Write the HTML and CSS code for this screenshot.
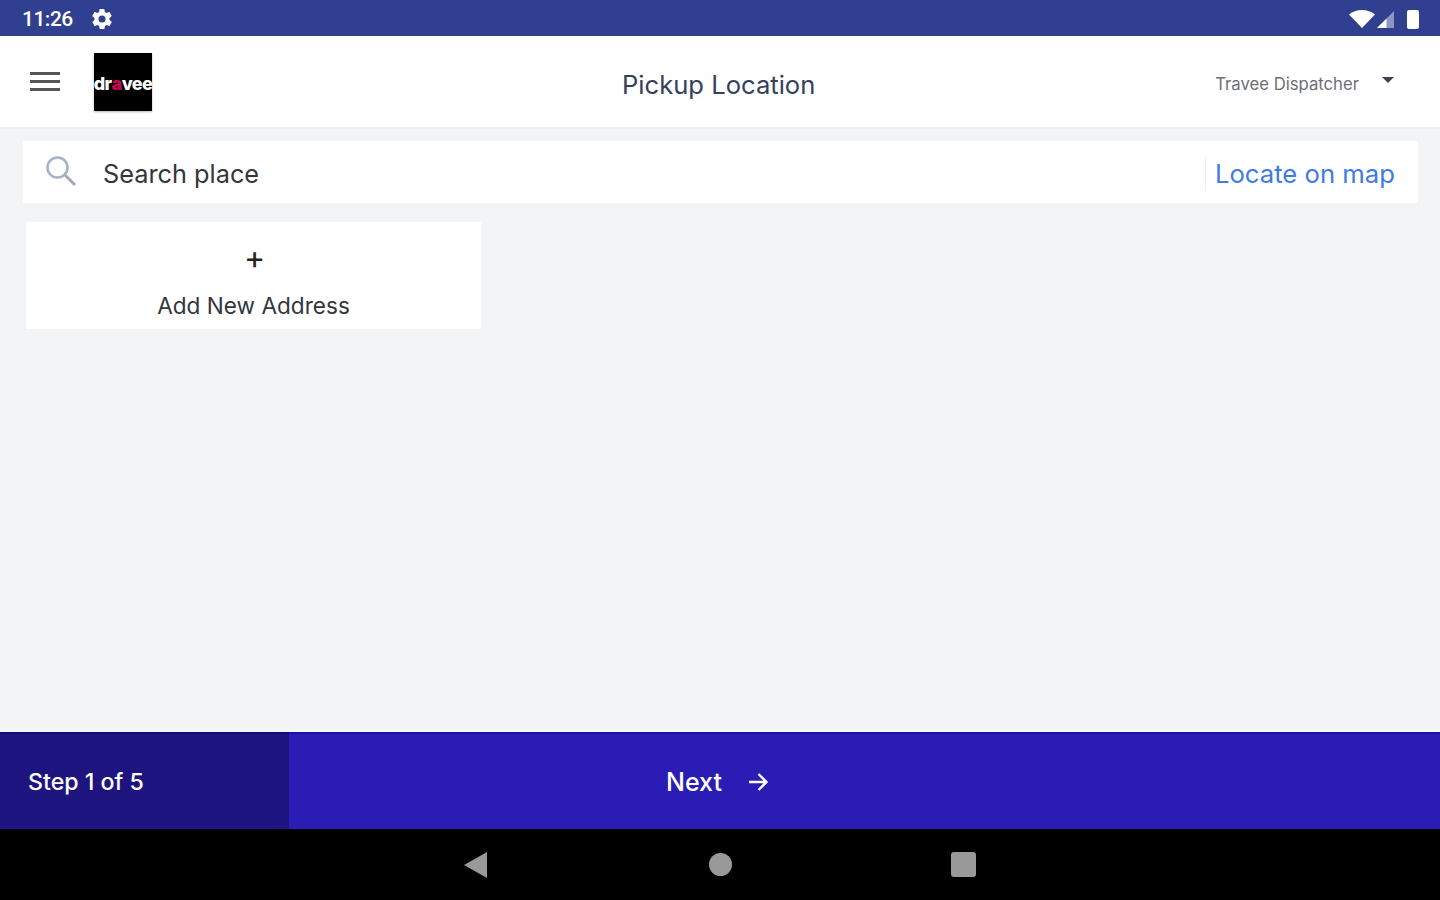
FILE: index.html
```html
<!DOCTYPE html>
<html lang="en">

<head>
  <meta charset="UTF-8" />
  <meta name="viewport" content="width=device-width, initial-scale=1.0" />
  <title>Pickup Location</title>
  <link rel="stylesheet" href="styles.css">
</head>

<body>
  <div class="status-bar">
    <span class="clock">11:26</span>
    <svg class="gear" viewBox="0 0 24 24" width="24" height="24">
      <path fill="#fff" d="M19.4 13c.04-.33.1-.66.1-1s-.06-.67-.1-1l2.1-1.65c.2-.15.25-.42.12-.64l-2-3.46c-.12-.22-.39-.3-.61-.22l-2.49 1c-.52-.4-1.08-.73-1.69-.98l-.38-2.65A.49.49 0 0 0 14 2h-4c-.25 0-.46.18-.49.42l-.38 2.65c-.61.25-1.17.59-1.69.98l-2.49-1c-.23-.09-.49 0-.61.22l-2 3.46c-.13.22-.07.49.12.64L4.6 11c-.04.33-.1.66-.1 1s.06.67.1 1l-2.1 1.65c-.2.15-.25.42-.12.64l2 3.46c.12.22.39.3.61.22l2.49-1c.52.4 1.08.73 1.69.98l.38 2.65c.03.24.24.42.49.42h4c.25 0 .46-.18.49-.42l.38-2.65c.61-.25 1.17-.59 1.69-.98l2.49 1c.23.09.49 0 .61-.22l2-3.46c.12-.22.07-.49-.12-.64L19.4 13zM12 15.5a3.5 3.5 0 1 1 0-7 3.5 3.5 0 0 1 0 7z" />
    </svg>
    <div class="status-right">
      <svg viewBox="0 0 26 18" width="26" height="18">
        <path fill="#fff" d="M0 4.500C3.500 1.500 8 0 13 0s9.500 1.500 13 4.500L13 18z" />
      </svg>
      <svg viewBox="0 0 16 16" width="17" height="17">
        <path fill="#fff" opacity="0.45" d="M16 0v16H0z" />
        <path fill="#fff" d="M9 7v9H0z" />
      </svg>
      <span class="battery"></span>
    </div>
  </div>

  <header class="top-bar">
    <button class="menu-btn" aria-label="Menu"><span></span><span></span><span></span></button>
    <div class="logo"><span>dr<b>a</b>vee</span></div>
    <h1 class="page-title">Pickup Location</h1>
    <div class="account">
      <span>Travee Dispatcher</span>
      <i class="caret"></i>
    </div>
  </header>

  <main class="content">
    <div class="search-box">
      <svg class="search-icon" viewBox="0 0 34 34" width="34" height="34">
        <circle cx="13.500" cy="13.500" r="10" fill="none" stroke="#a9b3c6" stroke-width="2.600" />
        <path d="M21 21l10 10" fill="none" stroke="#a3abb8" stroke-width="3" />
      </svg>
      <span class="search-text">Search place</span>
      <a href="#" class="locate-link">Locate on map</a>
    </div>

    <div class="address-card">
      <span class="plus">+</span>
      <span class="add-text">Add New Address</span>
    </div>
  </main>

  <footer class="step-bar">
    <div class="step-count">Step 1 of 5</div>
    <div class="next-btn">
      <span>Next</span>
      <svg viewBox="0 0 24 24" width="24" height="24">
        <path d="M3 12h17M12.500 4l8 8-8 8" fill="none" stroke="#fff" stroke-width="2.400" />
      </svg>
    </div>
  </footer>

  <nav class="android-nav">
    <i class="nav-back"></i>
    <i class="nav-home"></i>
    <i class="nav-recent"></i>
  </nav>
</body>

</html>
```

FILE: styles.css
```css
* {
  box-sizing: border-box;
}

body {
  margin: 0;
  height: 100vh;
  display: flex;
  flex-direction: column;
  overflow: hidden;
  font-family: 'Inter', 'Roboto', sans-serif;
  background: #f2f4f6;
}

.status-bar {
  height: 36px;
  display: flex;
  align-items: center;
  padding: 2px 21px 0 22px;
  background: #303f90;
  color: #fff;
}

.clock {
  font-family: 'Roboto', sans-serif;
  font-size: 21px;
  font-weight: 500;
  letter-spacing: -0.5px;
}

.gear {
  margin-left: 17px;
}

.status-right {
  margin-left: auto;
  display: flex;
  align-items: center;
  gap: 2px;
}

.battery {
  width: 12px;
  height: 19px;
  margin-left: 11px;
  background: #fff;
  border-radius: 2px;
}

.top-bar {
  height: 93px;
  display: flex;
  align-items: center;
  position: relative;
  padding: 0 46px 0 30px;
  background: #fff;
  border-bottom: 2px solid #eceef0;
}

.menu-btn {
  width: 30px;
  padding: 0;
  display: flex;
  flex-direction: column;
  gap: 5px;
  background: none;
  border: none;
}

.menu-btn span {
  height: 3px;
  background: #555;
}

.logo {
  width: 58px;
  height: 58px;
  margin-left: 34px;
  display: flex;
  align-items: center;
  justify-content: center;
  overflow: hidden;
  background: #000;
  box-shadow: 0 1px 2px rgba(0, 0, 0, 0.3);
  color: #fff;
  font-size: 18px;
  font-weight: 800;
  letter-spacing: -0.6px;
  white-space: nowrap;
}

.logo span {
  margin-top: 3px;
}

.logo b {
  color: #c2084f;
}

.page-title {
  position: absolute;
  left: 622px;
  top: 33px;
  margin: 0;
  font-size: 25.6px;
  line-height: 32px;
  font-weight: 400;
  color: #34405e;
}

.account {
  margin-left: auto;
  margin-top: 5px;
  display: flex;
  gap: 23px;
  font-size: 16.7px;
  color: #6b6f76;
}

.caret {
  width: 0;
  height: 0;
  margin-top: 3px;
  border-left: 6px solid transparent;
  border-right: 6px solid transparent;
  border-top: 6px solid #3c4250;
}

.content {
  flex: 1;
  padding: 12px 22px 0 23px;
}

.search-box {
  height: 62px;
  display: flex;
  align-items: center;
  padding: 0 23px 0 21px;
  background: #fff;
  border-radius: 2px;
}

.search-icon {
  margin-top: -2px;
}

.search-text {
  margin-left: 25px;
  margin-top: 2px;
  font-size: 25.3px;
  color: #33363b;
}

.locate-link {
  margin-left: auto;
  margin-top: 4px;
  padding-left: 9px;
  border-left: 1px solid #eef0f3;
  font-size: 25.7px;
  line-height: 34px;
  color: #3f7ae6;
  text-decoration: none;
}

.address-card {
  width: 455px;
  height: 107px;
  margin: 19px 0 0 3px;
  display: flex;
  flex-direction: column;
  align-items: center;
  background: #fff;
}

.plus {
  margin-top: 17px;
  margin-left: 2px;
  font-size: 32px;
  line-height: 38px;
  color: #222;
}

.add-text {
  margin-top: 15px;
  font-size: 22.6px;
  line-height: 28px;
  color: #33363b;
}

.step-bar {
  height: 97px;
  display: flex;
  color: #fff;
  font-weight: 500;
}

.step-count {
  width: 289px;
  display: flex;
  align-items: center;
  padding-left: 28px;
  border-top: 2px solid #140c70;
  background: #1e1480;
  font-size: 23.2px;
}

.next-btn {
  flex: 1;
  display: flex;
  align-items: center;
  justify-content: center;
  gap: 24px;
  padding-right: 293px;
  border-top: 2px solid #1c0fa6;
  background: #2a1cb4;
  font-size: 25px;
}

.android-nav {
  height: 71px;
  display: flex;
  align-items: center;
  justify-content: center;
  background: #000;
}

.nav-back {
  width: 0;
  height: 0;
  border-top: 13px solid transparent;
  border-bottom: 13px solid transparent;
  border-right: 23px solid #999;
}

.nav-home {
  width: 23px;
  height: 23px;
  margin: 0 219px 0 222px;
  border-radius: 50%;
  background: #999;
}

.nav-recent {
  width: 25px;
  height: 25px;
  border-radius: 3px;
  background: #999;
}
```
